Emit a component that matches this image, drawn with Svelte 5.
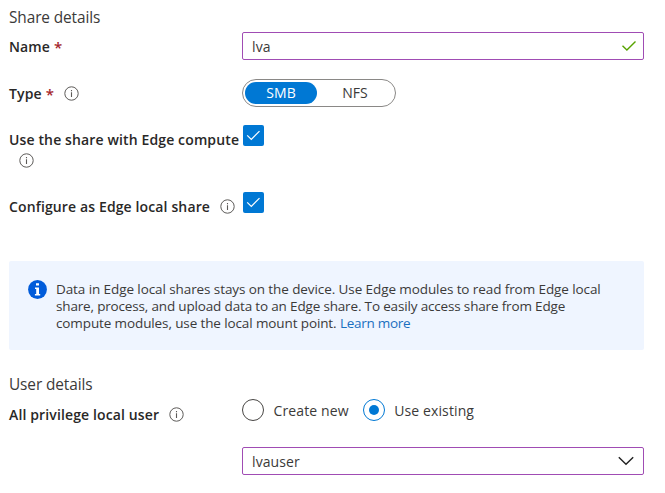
<script>
  let name = $state('lva');
  let type = $state('SMB');
  let userMode = $state('Use existing');
  const types = ['SMB', 'NFS'];
  const modes = ['Create new', 'Use existing'];
</script>

{#snippet info()}
  <svg class="info" width="15" height="15" viewBox="0 0 15 15" fill="none" stroke="#5c5a58">
    <circle cx="7.5" cy="7.5" r="6.7" stroke-width="1" />
    <path d="M7.5 6.2v4.8M7.5 4v1.3" stroke-width="1.1" />
  </svg>
{/snippet}

{#snippet check()}
  <span class="box">
    <svg width="21" height="21" viewBox="0 0 21 21" fill="none" stroke="#fff" stroke-width="1.2">
      <path d="M4.2 10.3l4.1 4.1 8.2-8.3" />
    </svg>
  </span>
{/snippet}

<main>
  <h2>Share details</h2>
  <div class="row name">
    <div class="label"><b>Name</b><i>*</i></div>
    <div class="field">
      <span class="value">{name}</span>
      <svg width="16" height="12" viewBox="0 0 16 12" fill="none" stroke="#57a300" stroke-width="1.4">
        <path d="M1.5 5.8l4.4 4.3 8.6-8.6" />
      </svg>
    </div>
  </div>
  <div class="row type">
    <div class="label"><b>Type</b><i>*</i>{@render info()}</div>
    <div class="toggle">
      {#each types as t}
        <button class:on={type === t} onclick={() => (type = t)}>{t}</button>
      {/each}
    </div>
  </div>
  <div class="row compute">
    <div class="label wrap"><b>Use the share with Edge compute</b>{@render info()}</div>
    {@render check()}
  </div>
  <div class="row local">
    <div class="label"><b>Configure as Edge local share</b>{@render info()}</div>
    {@render check()}
  </div>

  <section class="notice">
    <svg width="19" height="19" viewBox="0 0 19 19">
      <circle cx="9.5" cy="9.5" r="9.4" fill="#015cda" />
      <path d="M8 3.2h3v2.4H8zM7 7.4h4v6.7h1.2v1.5H6.9v-1.5h1.3V8.9H7z" fill="#fff" />
    </svg>
    <p>
      <span class="l1">Data in Edge local shares stays on the device. Use Edge modules to read from Edge local</span>
      <span class="l2">share, process, and upload data to an Edge share. To easily access share from Edge</span>
      <span class="l3">compute modules, use the local mount point. <a href="#learn">Learn more</a></span>
    </p>
  </section>

  <h2 class="user">User details</h2>
  <div class="row privilege">
    <div class="label"><b>All privilege local user</b>{@render info()}</div>
    <div class="radios">
      {#each modes as m}
        <button class:picked={userMode === m} onclick={() => (userMode = m)}>
          <span class="dot"></span><span>{m}</span>
        </button>
      {/each}
    </div>
  </div>
  <div class="row select">
    <div></div>
    <div class="field">
      <span class="value">lvauser</span>
      <svg class="chev" width="18" height="10" viewBox="0 0 18 10" fill="none" stroke="#222" stroke-width="1.4">
        <path d="M1.8 1.2L9 8.3l7.2-7.1" />
      </svg>
    </div>
  </div>
</main>

<style>
  :global(body) { background: #fff; }
  main {
    box-sizing: border-box;
    width: 665px;
    height: 493px;
    padding: 7px 21px 0 9px;
    overflow: hidden;
    font-family: 'Open Sans', 'Noto Sans', sans-serif;
    font-size: 13.5px;
    color: #3b3a39;
  }
  h2 { margin: 0; height: 22px; line-height: 22px; font-size: 15.4px; font-weight: 400; letter-spacing: -0.1px; white-space: nowrap; }
  .row { display: grid; grid-template-columns: 233px 402px; align-items: start; }
  .label { display: flex; align-items: center; height: 20px; white-space: nowrap; }
  .label b { font-size: 14px; font-weight: 600; line-height: 20px; letter-spacing: 0.13px; color: #292827; }
  .label i { margin: -1px 0 0 4px; font-size: 15px; line-height: 20px; font-style: normal; font-weight: 600; color: #a4262c; }
  .info { flex: none; display: block; margin: -1px 0 0 10px; }
  .wrap { flex-wrap: wrap; height: 42px; align-content: flex-start; }
  .wrap b { width: 233px; }
  .wrap .info { margin: 3px 0 0 9.5px; }
  .name { margin-top: 3px; height: 47px; }
  .name .label, .type .label { margin-top: 5px; }
  .field {
    box-sizing: border-box;
    display: flex;
    align-items: center;
    justify-content: space-between;
    height: 28px;
    padding: 0 6px 0 9px;
    border: 1.4px solid #a04cb4;
    border-radius: 2px;
  }
  .value { font-size: 14px; padding-top: 1px; letter-spacing: 0.1px; }
  .field svg { display: block; }
  .field .chev { margin-right: 2px; }
  .type { height: 46px; }
  .toggle {
    box-sizing: border-box;
    display: flex;
    width: 154px;
    height: 28px;
    padding: 2px;
    border: 1.4px solid #8a8886;
    border-radius: 14px;
  }
  button { font: inherit; color: inherit; border: 0; background: none; padding: 0; white-space: nowrap; }
  .toggle button { width: 73px; height: 22px; line-height: 22px; border-radius: 11px; font-size: 14px; }
  .toggle button + button { width: 77px; }
  .toggle button.on { background: #0078d4; color: #fff; }
  .compute { height: 67px; }
  .local { height: 69px; }
  .compute .label, .local .label { margin-top: 5px; }
  .box { display: block; width: 21px; height: 21px; margin-left: 1px; border-radius: 2px; background: #0078d4; }
  .box svg { display: block; }
  .notice {
    box-sizing: border-box;
    display: flex;
    width: 635px;
    height: 89px;
    padding: 19px 0 0 19px;
    border-radius: 2px;
    background: #eff5ff;
  }
  .notice p { margin: 1px 0 0 9px; line-height: 17px; }
  .notice p span { display: block; white-space: nowrap; }
  .l1 { letter-spacing: -0.09px; }
  .l2 { letter-spacing: -0.165px; }
  .l3 { letter-spacing: -0.115px; }
  a { color: #1a6fc0; text-decoration: none; letter-spacing: -0.27px; }
  .user { margin-top: 24px; }
  .privilege { margin-top: 2px; height: 49px; }
  .privilege .label { margin-top: 7px; }
  .radios { display: flex; gap: 14px; }
  .radios button { display: flex; align-items: center; height: 24px; gap: 9.5px; font-size: 14px; letter-spacing: 0.12px; }
  .dot { box-sizing: border-box; display: flex; width: 22px; height: 22px; border: 1.3px solid #484644; border-radius: 50%; }
  .picked .dot { border-color: #0078d4; }
  .picked .dot::after { content: ''; width: 10px; height: 10px; margin: auto; border-radius: 50%; background: #0078d4; }
</style>
